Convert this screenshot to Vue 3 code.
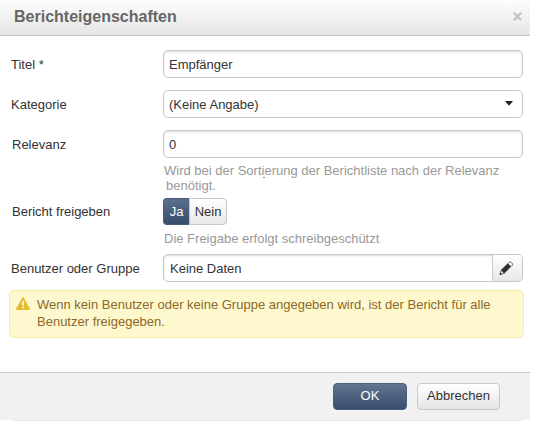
<script setup>
import { ref } from 'vue'

const title = ref('Empfänger')
const relevance = ref('0')
const shared = ref(true)
</script>

<template>
  <div class="dialog">
    <header class="head">
      <h1>Berichteigenschaften</h1>
      <button class="close" aria-label="Schließen">
        <svg width="9" height="9" viewBox="0 0 9 9"><path d="M.8 .8 8.2 8.2M8.2 .8 .8 8.2" stroke="#c0c0c0" stroke-width="2.2" /></svg>
      </button>
    </header>

    <main class="body">
      <div class="row">
        <label class="label">Titel <span>*</span></label>
        <input v-model="title" class="field input" />
      </div>
      <div class="row">
        <label class="label">Kategorie</label>
        <div class="field select">
          <span>(Keine Angabe)</span>
          <svg width="8" height="5" viewBox="0 0 8 5"><path d="M0 0H8L4.5 4.2H3.5Z" fill="#222" /></svg>
        </div>
      </div>
      <div class="row">
        <label class="label in">Relevanz</label>
        <input v-model="relevance" class="field input" />
      </div>
      <p class="hint hint-rel"><span>Wird bei der Sort<i class="mark">i</i>erung der Berichtliste nach der Relevanz</span><br><span class="second">benötigt.</span></p>
      <div class="row share">
        <label class="label in">Bericht freigeben</label>
        <div class="toggle">
          <button :class="{ on: shared }" class="yes" @click="shared = true">Ja</button>
          <button :class="{ on: !shared }" class="no" @click="shared = false">Nein</button>
        </div>
      </div>
      <p class="hint hint-share">Die Freigabe erfolgt schreibgeschützt</p>
      <div class="row">
        <label class="label">Benutzer oder Gruppe</label>
        <div class="field picker">
          <span class="value">Keine Daten</span>
          <button class="edit" aria-label="Bearbeiten">
            <svg width="15" height="15" viewBox="0 0 15 15">
              <path d="M2 9.3 8.9 2.4 12 5.5 5.1 12.4Z" fill="#2c2c2c" stroke="#2c2c2c" stroke-width=".5" />
              <path d="M2 9.5 1 13.6 5.1 12.4" fill="#ddd" stroke="#555" stroke-width=".8" />
              <path d="M.6 14 1.2 11.6 3 13.4Z" fill="#303030" />
              <path d="M9.3 2.4 10.5 1.2Q11.2.7 12 1.3L13.4 2.7Q13.9 3.4 13.4 4.1L12.2 5.3" fill="#fff" stroke="#444" stroke-width=".9" />
            </svg>
          </button>
        </div>
      </div>
      <div class="alert">
        <svg class="warn" width="14" height="13" viewBox="0 0 14 13">
          <path d="M7 .9 13.2 12.2H.8Z" fill="#e5bd2c" stroke="#e5bd2c" stroke-width="1.5" stroke-linejoin="round" />
          <path d="M6 4.2H8V8.2H6ZM6 9.5H8V11.2H6Z" fill="#fff9d5" />
        </svg>
        <p>Wenn kein Benutzer oder keine Gruppe angegeben wird, ist der Bericht für alle<br>Benutzer freigegeben.</p>
      </div>
    </main>

    <footer class="foot">
      <button class="btn primary">OK</button>
      <button class="btn cancel">Abbrechen</button>
    </footer>
    <div class="edge"></div>
  </div>
</template>

<style>
body {
  background: #fff;
}
</style>

<style scoped>
* {
  box-sizing: border-box;
}
.dialog {
  width: 530px;
  font: 13px/18px "Liberation Sans", Arial, sans-serif;
  color: #333;
}
button,
input {
  font: inherit;
  color: inherit;
  margin: 0;
  padding: 0;
}
.head {
  height: 36px;
  display: flex;
  align-items: center;
  justify-content: space-between;
  padding: 0 8px 3px 14px;
  border-bottom: 1px solid #c8c8c8;
  background: linear-gradient(#fdfdfd, #e6e6e6);
}
h1 {
  margin: 0;
  padding-top: 2px;
  font-size: 16px;
  line-height: 20px;
  color: #666;
}
.close {
  display: flex;
  border: 0;
  background: none;
}
.body {
  height: 336px;
  padding-top: 14px;
}
.row {
  display: flex;
  align-items: center;
  height: 28px;
  margin-bottom: 12px;
}
.label {
  width: 163px;
  padding: 2px 0 0 11px;
}
.in {
  padding-left: 12px;
}
.share .label {
  padding-top: 0;
}
.field {
  width: 360px;
  height: 28px;
  border: 1px solid #c8c8c8;
  border-radius: 5px;
  background: #fff;
}
.input {
  padding: 0 5px;
  outline: 0;
  box-shadow: inset 0 1px 2px rgba(0, 0, 0, .15);
}
.select {
  display: flex;
  align-items: center;
  justify-content: space-between;
  padding: 1px 9px 0 5px;
}
.select svg {
  margin-bottom: 3px;
}
.hint {
  margin: 0 0 0 163px;
  padding-left: 1px;
  line-height: 15px;
  white-space: nowrap;
  color: #999;
}
.hint-rel {
  margin-top: -9px;
  height: 37px;
  padding-top: 2px;
}
.mark {
  position: relative;
  font-style: normal;
}
.mark::after {
  content: "";
  position: absolute;
  left: 1px;
  bottom: 0;
  width: 2px;
  height: 1px;
  background: #888;
}
.second {
  margin-left: 2px;
}
.row.share {
  height: 27px;
  margin: 0;
}
.toggle {
  display: flex;
  height: 27px;
}
.toggle button {
  border: 1px solid #c8c8c8;
  background: linear-gradient(#fff, #e7e7e7);
}
.toggle .yes {
  width: 26px;
  border-right: 0;
  border-radius: 4px 0 0 4px;
}
.toggle .no {
  width: 38px;
  border-radius: 0 4px 4px 0;
}
.toggle .on {
  color: #fff;
  border-color: #465b7d;
  background: linear-gradient(#5b7090, #384c6e);
}
.hint-share {
  height: 29px;
  padding-top: 6px;
}
.picker {
  display: flex;
  overflow: hidden;
  box-shadow: inset 0 1px 2px rgba(0, 0, 0, .15);
}
.value {
  flex: 1;
  padding: 5px 0 0 6px;
}
.edit {
  width: 30px;
  display: flex;
  align-items: center;
  justify-content: center;
  padding-right: 2px;
  border: 0;
  border-left: 1px solid #c8c8c8;
  background: linear-gradient(#fff, #e7e7e7);
}
.alert {
  display: flex;
  width: 515px;
  height: 48px;
  margin: -4px 0 0 9px;
  padding: 5px 0 0 6px;
  border: 1px solid #f9eda0;
  border-radius: 5px;
  background: #fef8cf;
  color: #8d6828;
}
.warn {
  margin: 1px 7px 0 0;
}
.alert p {
  margin: 0;
  line-height: 17px;
}
.foot {
  display: flex;
  height: 48px;
  gap: 10px;
  padding: 10px 30px 0 0;
  justify-content: flex-end;
  border-top: 1px solid #c8c8c8;
  background: #f1f1f1;
}
.btn {
  height: 27px;
  padding-bottom: 2px;
  border: 1px solid #c8c8c8;
  border-radius: 4px;
  background: linear-gradient(#fff, #e5e5e5);
}
.primary {
  width: 74px;
  color: #fff;
  border-color: #4a5f80;
  background: linear-gradient(#61758f, #384c6e);
}
.cancel {
  width: 83px;
}
.edge {
  height: 1px;
  margin: 0 8px 0 13px;
  background: #e9e9e9;
}
</style>
